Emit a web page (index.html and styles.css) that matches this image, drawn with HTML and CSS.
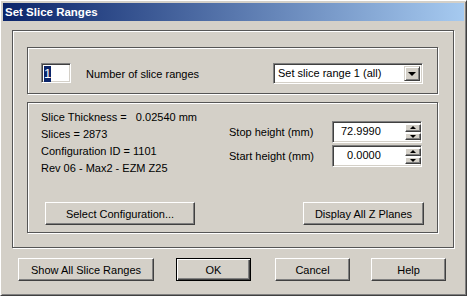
FILE: index.html
```html
<!DOCTYPE html>
<html lang="en">
<head>
  <meta charset="UTF-8">
  <title>Set Slice Ranges</title>
  <link rel="stylesheet" href="styles.css">
</head>
<body>

<div class="window">
  <div class="titlebar">Set Slice Ranges</div>

  <div class="client">
    <div class="group outer">

      <div class="group ranges">
        <div class="edit count"><span class="sel">1</span></div>
        <span class="count-label">Number of slice ranges</span>
        <div class="edit combo">
          <span class="combo-text">Set slice range 1 (all)</span>
          <span class="combo-btn"><i class="tri-down big"></i></span>
        </div>
      </div>

      <div class="group info">
        <div class="info-main">
          <div class="specs">
            <div class="spec">Slice Thickness =   0.02540 mm</div>
            <div class="spec">Slices = 2873</div>
            <div class="spec">Configuration ID = 1101</div>
            <div class="spec">Rev 06 - Max2 - EZM Z25</div>
          </div>
          <div class="heights">
            <div class="height-row">
              <span class="height-label">Stop height (mm)</span>
              <div class="edit spin">
                <span class="spin-val">72.9990</span>
                <div class="spin-btns">
                  <span class="spin-btn"><i class="tri-up"></i></span>
                  <span class="spin-btn"><i class="tri-down"></i></span>
                </div>
              </div>
            </div>
            <div class="height-row">
              <span class="height-label">Start height (mm)</span>
              <div class="edit spin">
                <span class="spin-val">  0.0000</span>
                <div class="spin-btns">
                  <span class="spin-btn"><i class="tri-up"></i></span>
                  <span class="spin-btn"><i class="tri-down"></i></span>
                </div>
              </div>
            </div>
          </div>
        </div>
        <div class="info-buttons">
          <button class="btn select-config">Select Configuration...</button>
          <button class="btn display-z">Display All Z Planes</button>
        </div>
      </div>

    </div>

    <div class="actions">
      <button class="btn show-all">Show All Slice Ranges</button>
      <button class="btn default ok">OK</button>
      <button class="btn cancel">Cancel</button>
      <button class="btn help">Help</button>
    </div>
  </div>
</div>

</body>
</html>
```

FILE: styles.css
```css
body {
  margin: 0;
  background-color: #d4d0c8;
  font-family: 'Liberation Sans', Arial, sans-serif;
  font-size: 11px;
  color: #000;
}
.window {
  width: 467px;
  height: 296px;
  box-sizing: border-box;
  border: 1px solid;
  border-color: #fff #404040 #404040 #fff;
  box-shadow: inset 1px 1px #d4d0c8, inset -1px -1px #808080;
  padding: 2px;
  overflow: hidden;
}
.titlebar {
  height: 18px;
  line-height: 18px;
  padding-left: 2px;
  background: linear-gradient(to right, #0a246a, #a6caf0);
  color: #fff;
  font-weight: bold;
  font-size: 11.5px;
}
.client {
  padding: 9px 0 0 9px;
}

/* etched group frames */
.group {
  box-sizing: border-box;
  border: 1px solid #555;
  box-shadow: inset 1px 1px #fff, 1px 1px #fff;
}
.outer {
  width: 442px;
  height: 218px;
  padding: 16px 15px 14px 14px;
}
.ranges {
  height: 47px;
  display: flex;
  align-items: flex-start;
  padding: 15px 14px 0 13px;
}
.info {
  height: 131px;
  margin-top: 8px;
  display: flex;
  flex-direction: column;
  padding: 0 13px 7px 13px;
}

/* sunken fields */
.edit {
  box-sizing: border-box;
  background: #fff;
  border: 1px solid;
  border-color: #808080 #fff #fff #808080;
  box-shadow: inset 1px 1px #404040, inset -1px -1px #d4d0c8;
  padding: 2px;
}
.count {
  width: 30px;
  height: 20px;
}
.sel {
  display: inline-block;
  background: #0a246a;
  color: #fff;
  font-size: 13px;
  line-height: 16px;
  width: 7px;
  text-align: center;
  margin-left: 0;
}
.count-label {
  flex: 1;
  margin-left: 15px;
  padding-top: 4px;
  line-height: 14px;
}
.combo {
  width: 150px;
  height: 21px;
  display: flex;
}
.combo-text {
  flex: 1;
  line-height: 15px;
  padding-left: 2px;
}
.combo-btn {
  width: 16px;
  box-sizing: border-box;
  background: #d4d0c8;
  border: 1px solid;
  border-color: #d4d0c8 #404040 #404040 #d4d0c8;
  box-shadow: inset 1px 1px #fff, inset -1px -1px #808080;
  display: flex;
  align-items: center;
  justify-content: center;
}

/* tiny arrows */
.tri-down,
.tri-up {
  width: 0;
  height: 0;
  border-left: 3px solid transparent;
  border-right: 3px solid transparent;
}
.tri-down {
  border-top: 3px solid #000;
}
.tri-up {
  border-bottom: 3px solid #000;
}
.tri-down.big {
  border-left-width: 4px;
  border-right-width: 4px;
  border-top-width: 4px;
}

.info-main {
  display: flex;
}
.specs {
  padding-top: 6px;
  line-height: 17px;
}
.spec {
  white-space: pre;
}
.heights {
  margin: 18px 2px 0 auto;
  display: flex;
  flex-direction: column;
  gap: 2px;
}
.height-row {
  display: flex;
  align-items: center;
}
.height-label {
  width: 103px;
}
.spin {
  width: 90px;
  height: 22px;
  display: flex;
  padding: 2px 0 2px 2px;
}
.spin-val {
  flex: 1;
  white-space: pre;
  padding-left: 6px;
  line-height: 15px;
}
.spin-btns {
  width: 16px;
  display: flex;
  flex-direction: column;
  gap: 1px;
}
.spin-btn {
  flex: 1;
  box-sizing: border-box;
  background: #d4d0c8;
  border: 1px solid;
  border-color: #fff #404040 #404040 #fff;
  box-shadow: inset -1px -1px #808080;
  display: flex;
  align-items: center;
  justify-content: center;
}

/* push buttons */
.btn {
  box-sizing: border-box;
  height: 23px;
  padding: 0;
  font: inherit;
  color: #000;
  background: #d4d0c8;
  border: 1px solid;
  border-color: #fff #404040 #404040 #fff;
  box-shadow: inset -1px -1px #808080;
  cursor: pointer;
}
.btn.default {
  border: 1px solid #000;
  box-shadow: inset 1px 1px #fff, inset -1px -1px #404040, inset -2px -2px #808080;
}
.info-buttons {
  margin-top: auto;
  display: flex;
  justify-content: space-between;
  padding-left: 4px;
}
.select-config {
  width: 150px;
}
.display-z {
  width: 121px;
}
.actions {
  display: flex;
  margin-top: 10px;
  padding-left: 6px;
}
.show-all {
  width: 136px;
}
.ok {
  width: 75px;
  margin-left: 22px;
}
.cancel {
  width: 75px;
  margin-left: 24px;
}
.help {
  width: 75px;
  margin-left: 21px;
}
```
